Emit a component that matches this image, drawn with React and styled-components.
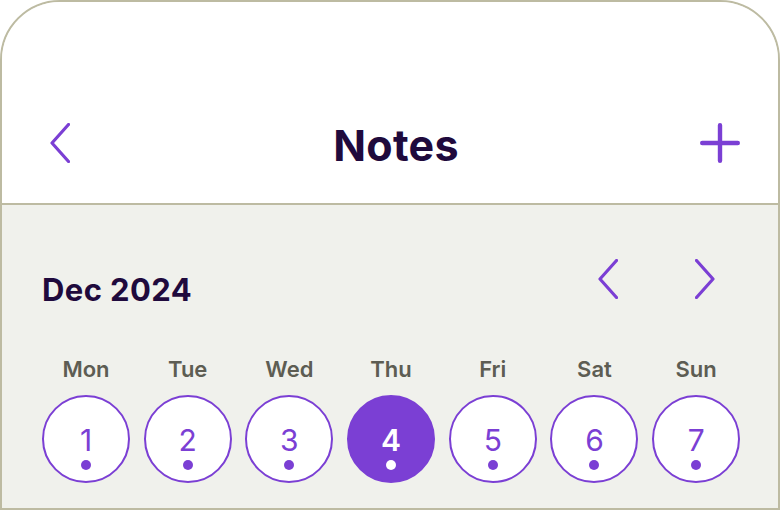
import React from "react";
import styled, { createGlobalStyle } from "styled-components";

const Global = createGlobalStyle`
  html, body { margin: 0; padding: 0; background: #ffffff; }
  body { font-family: "Inter", "Noto Sans", sans-serif; }
  * { box-sizing: border-box; }
`;

const Frame = styled.div`
  width: 780px;
  height: 510px;
  border: 2px solid #bdbba2;
  border-radius: 60px 60px 0 0;
  overflow: hidden;
  display: flex;
  flex-direction: column;
  background: #f0f1ec;
`;

const Header = styled.header`
  height: 203px;
  flex: none;
  background: #ffffff;
  border-bottom: 2px solid #bdbba2;
  display: grid;
  grid-template-columns: 1fr auto 1fr;
  align-items: center;
  padding: 116px 38px 39px 48px;
`;

const Title = styled.h1`
  margin: 0;
  font-size: 43px;
  font-weight: 700;
  color: #1f0a3d;
  letter-spacing: 0.3px;
  line-height: 1;
  padding-top: 6px;
  padding-left: 2px;
`;

const IconButton = styled.button`
  border: none;
  background: none;
  padding: 0;
  display: flex;
  width: ${(p) => p.$w}px;
  height: 40px;
  cursor: pointer;
  justify-self: ${(p) => p.$align || "auto"};
`;

const Body = styled.section`
  flex: 1;
  padding: 53px 40px 0 40px;
  display: flex;
  flex-direction: column;
`;

const MonthRow = styled.div`
  display: flex;
  align-items: flex-start;
  justify-content: space-between;
  height: 98px;
`;

const Month = styled.h2`
  margin: 13px 0 0 0;
  font-size: 31px;
  font-weight: 700;
  color: #1f0a3d;
  letter-spacing: 0.4px;
`;

const Nav = styled.div`
  display: flex;
  gap: 77px;
  margin-right: 23px;
  margin-top: 1px;
`;

const Week = styled.div`
  display: grid;
  grid-template-columns: repeat(7, 88px);
  column-gap: 13.7px;
`;

const DayCol = styled.div`
  display: flex;
  flex-direction: column;
  align-items: center;
`;

const DayName = styled.span`
  font-size: 22px;
  font-weight: 600;
  color: #5d5d53;
  height: 39px;
  line-height: 26px;
`;

const DayCircle = styled.div`
  width: 88px;
  height: 88px;
  border-radius: 50%;
  border: 2px solid #7b3fd4;
  background: ${(p) => (p.$active ? "#7b3fd4" : "#ffffff")};
  color: ${(p) => (p.$active ? "#ffffff" : "#7b3fd4")};
  display: flex;
  flex-direction: column;
  align-items: center;
  justify-content: center;
  position: relative;
`;

const DayNum = styled.span`
  font-size: 30px;
  font-weight: ${(p) => (p.$active ? 600 : 400)};
  line-height: 1;
  margin-top: 1px;
`;

const Dot = styled.span`
  position: absolute;
  left: 50%;
  top: 63px;
  width: 10px;
  height: 10px;
  margin-left: -5px;
  border-radius: 50%;
  background: currentColor;
`;

const Chevron = ({ dir = "left", sw = 3.2 }) => (
  <svg width="20" height="40" viewBox="0 0 20 40" fill="none">
    <path
      d={dir === "left" ? "M18.5 1.5 L2 20 L18.5 38.5" : "M1.5 1.5 L18 20 L1.5 38.5"}
      stroke="#7b3fd4"
      strokeWidth={sw}
      strokeLinecap="round"
      strokeLinejoin="round"
    />
  </svg>
);

const Plus = () => (
  <svg width="40" height="40" viewBox="0 0 40 40" fill="none">
    <path d="M20 2.2 V37.8 M2.2 20 H37.8" stroke="#7b3fd4" strokeWidth="4.4" strokeLinecap="round" />
  </svg>
);

const days = [
  ["Mon", 1],
  ["Tue", 2],
  ["Wed", 3],
  ["Thu", 4],
  ["Fri", 5],
  ["Sat", 6],
  ["Sun", 7],
];

export default function App() {
  return (
    <>
      <Global />
      <Frame>
        <Header>
          <IconButton $w={20} $align="start" aria-label="Back">
            <Chevron dir="left" />
          </IconButton>
          <Title>Notes</Title>
          <IconButton $w={40} $align="end" aria-label="Add">
            <Plus />
          </IconButton>
        </Header>
        <Body>
          <MonthRow>
            <Month>Dec 2024</Month>
            <Nav>
              <IconButton $w={20} aria-label="Previous">
                <Chevron dir="left" />
              </IconButton>
              <IconButton $w={20} aria-label="Next">
                <Chevron dir="right" />
              </IconButton>
            </Nav>
          </MonthRow>
          <Week>
            {days.map(([n, d]) => (
              <DayCol key={n}>
                <DayName>{n}</DayName>
                <DayCircle $active={d === 4}>
                  <DayNum $active={d === 4}>{d}</DayNum>
                  <Dot />
                </DayCircle>
              </DayCol>
            ))}
          </Week>
        </Body>
      </Frame>
    </>
  );
}
